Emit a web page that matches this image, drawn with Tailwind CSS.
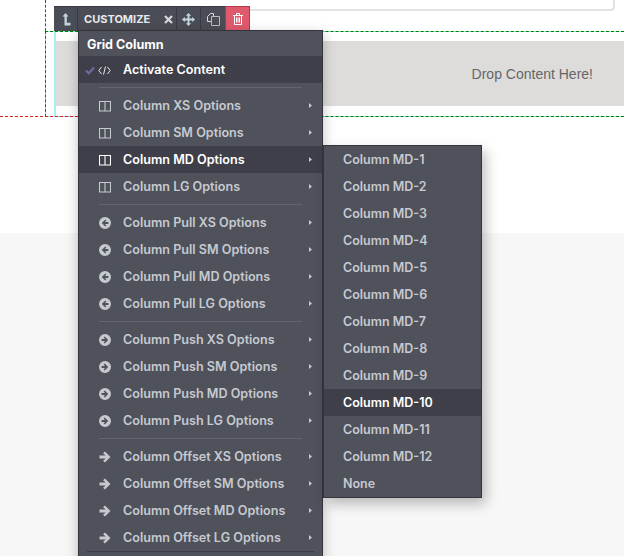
<!DOCTYPE html>
<html lang="en">
  <head>
    <meta charset="UTF-8" />
    <title>Grid Column Menu</title>
    <script src="https://cdn.jsdelivr.net/npm/@tailwindcss/browser@4"></script>
  </head>
  <body class="bg-[#f7f7f7] h-[556px] overflow-hidden relative font-['Inter',sans-serif]">
    <!-- icons -->
    <svg class="hidden">
      <symbol id="cols" viewBox="0 0 12 12"><path d="M.5 1.500h11v9.500H.5zM6 1.500v9.500" fill="none" stroke="currentColor" stroke-width="1.100"/></symbol>
      <symbol id="pull" viewBox="0 0 12 12"><path fill-rule="evenodd" fill="currentColor" d="M6 0a6 6 0 1 1 0 12A6 6 0 0 1 6 0ZM6.300 2.500 2.800 6l3.500 3.500 1.100-1.100L6 7.100h3.400V4.900H6l1.400-1.300Z"/></symbol>
      <symbol id="push" viewBox="0 0 12 12"><path fill-rule="evenodd" fill="currentColor" d="M6 0a6 6 0 1 1 0 12A6 6 0 0 1 6 0ZM5.700 2.500 4.600 3.600 6 4.900H2.600v2.200H6L4.600 8.400l1.100 1.100L9.200 6Z"/></symbol>
      <symbol id="offset" viewBox="0 0 12 12"><path fill="currentColor" d="M5.900.4 11.500 6l-5.600 5.600-1.800-1.800L6.700 7.400H.5V4.600h6.200L4.100 2.200Z"/></symbol>
      <symbol id="caret" viewBox="0 0 3 5"><path fill="currentColor" d="M0 0l3 2.500L0 5Z"/></symbol>
    </svg>

    <div class="bg-white h-[233px]">
      <div class="h-[31px] ml-[45px] border-l border-dashed border-[#008000] pl-[8px] pr-[9px]">
        <div class="h-[11px] border-b-2 border-r-2 border-[#e3e3e3] rounded-br-[4px]"></div>
      </div>
      <div class="ml-[45px] h-[86px] flex border-l border-t border-b border-dashed border-[#008000] bg-[#8fe6ea]">
        <div class="w-[8px] bg-white"></div>
        <div class="flex-1 bg-white border-l-2 border-[#a8eef2] py-[9px]">
          <div class="h-[65px] bg-[#dddcda] flex items-center justify-end pr-[31px] pt-[2px] font-['Liberation_Sans',sans-serif] text-[14px] text-[#666666]">Drop Content Here!</div>
        </div>
      </div>
    </div>
    <div class="absolute left-0 top-[116px] w-[78px] border-t border-dashed border-[#e02020]"></div>

    <!-- toolbar -->
    <div class="absolute left-[54px] top-[6px] h-[25px] w-[196px] flex bg-[#4b4d56] text-[#d5d8dc] border-t border-[#3a3b44]">
      <div class="w-[24px] flex items-center justify-center border-r border-[#3a3b44]">
        <svg width="10" height="13" viewBox="0 0 10 13"><path fill="#c3d5dc" d="M4.500 0 7.500 3.500H5.800V9.800H9.500V12.500H3.500V3.500H1.500Z"/></svg>
      </div>
      <div class="w-[99px] flex items-center pl-[6px] border-r border-[#3a3b44]">
        <span class="text-[11px] font-bold text-[#e6eaee] w-[69px] whitespace-nowrap">CUSTOMIZE</span>
        <svg width="9" height="9" viewBox="0 0 9 9" class="ml-[11px]"><path d="M1 1l7 7M8 1 1 8" stroke="#d5d8dc" stroke-width="2.200"/></svg>
      </div>
      <div class="w-[24px] flex items-center justify-center border-r border-[#3a3b44]">
        <svg width="13" height="13" viewBox="0 0 12 12"><path fill="#c4d6de" d="M6 0l2.400 2.600H6.900V5.100h2.500V3.600L12 6 9.400 8.400V6.900H6.900v2.500h1.500L6 12 3.600 9.400h1.500V6.900H2.600v1.500L0 6l2.600-2.400v1.500h2.500V2.600H3.600Z"/></svg>
      </div>
      <div class="w-[24px] flex items-center justify-center">
        <svg width="13" height="13" viewBox="0 0 13 13" fill="none" stroke="#d5d8dc"><path d="M4.500 8.500H.5v-5l3-3h3v3"/><path d="M4.500 3.500h8v9h-8z" stroke="#b8bcc2"/></svg>
      </div>
      <div class="w-[25px] flex items-center justify-center bg-[#e05a6e] border border-[#b8344a] -mt-px">
        <svg width="10" height="12" viewBox="0 0 10 12" fill="none" stroke="#fff"><path d="M0 2.500h10M3.500 2V.5h3V2M1.500 2.500V11.500h7V2.500M3.500 4.500v5M5 4.500v5M6.500 4.500v5"/></svg>
      </div>
    </div>

    <!-- main menu -->
    <div class="absolute left-[78px] top-[30px] w-[245px] h-[540px] bg-[#4f515b] border border-[#33343c] text-[12.6px] font-semibold text-[#c6cad0] shadow-[0_4px_12px_rgba(0,0,0,0.25)]">
      <div class="h-[25px] flex items-center pl-[8px] pt-[4px] text-white font-bold">Grid Column</div>
      <div class="h-[27px] flex items-center pt-px bg-[#3f3f49] text-white">
        <svg width="10" height="9" viewBox="0 0 10 9" class="ml-[6px]"><path d="M1 4.500 3.800 7.300 9 1.500" fill="none" stroke="#6f69a0" stroke-width="2.200"/></svg>
        <svg width="13" height="9" viewBox="0 0 13 9" class="ml-[3px]" fill="none" stroke="#e8e8ea"><path d="M3.500 1 .8 4.500 3.500 8M9.500 1l2.700 3.500L9.500 8M7.500.5l-2 8"/></svg>
        <span class="ml-[12px]">Activate Content</span>
      </div>

      <div class="mx-[20px] my-[4px] h-px bg-[#62646e]"></div>
      <div class="h-[27px] flex items-center pl-[20px] pt-px"><svg class="w-[12px] h-[12px]"><use href="#cols"/></svg><span class="ml-[12px] flex-1">Column XS Options</span><svg class="w-[3px] h-[5px] mr-[10px] -mt-[2px]"><use href="#caret"/></svg></div>
      <div class="h-[27px] flex items-center pl-[20px] pt-px"><svg class="w-[12px] h-[12px]"><use href="#cols"/></svg><span class="ml-[12px] flex-1">Column SM Options</span><svg class="w-[3px] h-[5px] mr-[10px] -mt-[2px]"><use href="#caret"/></svg></div>
      <div class="h-[27px] flex items-center pl-[20px] pt-px bg-[#3f3f49] text-white"><svg class="w-[12px] h-[12px]"><use href="#cols"/></svg><span class="ml-[12px] flex-1">Column MD Options</span><svg class="w-[3px] h-[5px] mr-[10px] -mt-[2px] text-[#c6cad0]"><use href="#caret"/></svg></div>
      <div class="h-[27px] flex items-center pl-[20px] pt-px"><svg class="w-[12px] h-[12px]"><use href="#cols"/></svg><span class="ml-[12px] flex-1">Column LG Options</span><svg class="w-[3px] h-[5px] mr-[10px] -mt-[2px]"><use href="#caret"/></svg></div>

      <div class="mx-[20px] my-[4px] h-px bg-[#62646e]"></div>
      <div class="h-[27px] flex items-center pl-[20px] pt-px"><svg class="w-[12px] h-[12px]"><use href="#pull"/></svg><span class="ml-[12px] flex-1">Column Pull XS Options</span><svg class="w-[3px] h-[5px] mr-[10px] -mt-[2px]"><use href="#caret"/></svg></div>
      <div class="h-[27px] flex items-center pl-[20px] pt-px"><svg class="w-[12px] h-[12px]"><use href="#pull"/></svg><span class="ml-[12px] flex-1">Column Pull SM Options</span><svg class="w-[3px] h-[5px] mr-[10px] -mt-[2px]"><use href="#caret"/></svg></div>
      <div class="h-[27px] flex items-center pl-[20px] pt-px"><svg class="w-[12px] h-[12px]"><use href="#pull"/></svg><span class="ml-[12px] flex-1">Column Pull MD Options</span><svg class="w-[3px] h-[5px] mr-[10px] -mt-[2px]"><use href="#caret"/></svg></div>
      <div class="h-[27px] flex items-center pl-[20px] pt-px"><svg class="w-[12px] h-[12px]"><use href="#pull"/></svg><span class="ml-[12px] flex-1">Column Pull LG Options</span><svg class="w-[3px] h-[5px] mr-[10px] -mt-[2px]"><use href="#caret"/></svg></div>

      <div class="mx-[20px] my-[4px] h-px bg-[#62646e]"></div>
      <div class="h-[27px] flex items-center pl-[20px] pt-px"><svg class="w-[12px] h-[12px]"><use href="#push"/></svg><span class="ml-[12px] flex-1">Column Push XS Options</span><svg class="w-[3px] h-[5px] mr-[10px] -mt-[2px]"><use href="#caret"/></svg></div>
      <div class="h-[27px] flex items-center pl-[20px] pt-px"><svg class="w-[12px] h-[12px]"><use href="#push"/></svg><span class="ml-[12px] flex-1">Column Push SM Options</span><svg class="w-[3px] h-[5px] mr-[10px] -mt-[2px]"><use href="#caret"/></svg></div>
      <div class="h-[27px] flex items-center pl-[20px] pt-px"><svg class="w-[12px] h-[12px]"><use href="#push"/></svg><span class="ml-[12px] flex-1">Column Push MD Options</span><svg class="w-[3px] h-[5px] mr-[10px] -mt-[2px]"><use href="#caret"/></svg></div>
      <div class="h-[27px] flex items-center pl-[20px] pt-px"><svg class="w-[12px] h-[12px]"><use href="#push"/></svg><span class="ml-[12px] flex-1">Column Push LG Options</span><svg class="w-[3px] h-[5px] mr-[10px] -mt-[2px]"><use href="#caret"/></svg></div>

      <div class="mx-[20px] my-[4px] h-px bg-[#62646e]"></div>
      <div class="h-[27px] flex items-center pl-[20px] pt-px"><svg class="w-[12px] h-[12px]"><use href="#offset"/></svg><span class="ml-[12px] flex-1">Column Offset XS Options</span><svg class="w-[3px] h-[5px] mr-[10px] -mt-[2px]"><use href="#caret"/></svg></div>
      <div class="h-[27px] flex items-center pl-[20px] pt-px"><svg class="w-[12px] h-[12px]"><use href="#offset"/></svg><span class="ml-[12px] flex-1">Column Offset SM Options</span><svg class="w-[3px] h-[5px] mr-[10px] -mt-[2px]"><use href="#caret"/></svg></div>
      <div class="h-[27px] flex items-center pl-[20px] pt-px"><svg class="w-[12px] h-[12px]"><use href="#offset"/></svg><span class="ml-[12px] flex-1">Column Offset MD Options</span><svg class="w-[3px] h-[5px] mr-[10px] -mt-[2px]"><use href="#caret"/></svg></div>
      <div class="h-[27px] flex items-center pl-[20px] pt-px"><svg class="w-[12px] h-[12px]"><use href="#offset"/></svg><span class="ml-[12px] flex-1">Column Offset LG Options</span><svg class="w-[3px] h-[5px] mr-[10px] -mt-[2px]"><use href="#caret"/></svg></div>

      <div class="mx-[8px] h-px bg-[#3a3b44]"></div>
    </div>

    <!-- column md submenu -->
    <div class="absolute left-[323px] top-[145px] w-[159px] bg-[#4f515b] border border-[#33343c] text-[12.5px] font-semibold text-[#c6cad0] shadow-[4px_6px_12px_rgba(0,0,0,0.25)]">
      <div class="h-[27px] flex items-center pl-[19px] pt-px">Column MD-1</div>
      <div class="h-[27px] flex items-center pl-[19px] pt-px">Column MD-2</div>
      <div class="h-[27px] flex items-center pl-[19px] pt-px">Column MD-3</div>
      <div class="h-[27px] flex items-center pl-[19px] pt-px">Column MD-4</div>
      <div class="h-[27px] flex items-center pl-[19px] pt-px">Column MD-5</div>
      <div class="h-[27px] flex items-center pl-[19px] pt-px">Column MD-6</div>
      <div class="h-[27px] flex items-center pl-[19px] pt-px">Column MD-7</div>
      <div class="h-[27px] flex items-center pl-[19px] pt-px">Column MD-8</div>
      <div class="h-[27px] flex items-center pl-[19px] pt-px">Column MD-9</div>
      <div class="h-[27px] flex items-center pl-[19px] pt-px bg-[#3f3f49] text-white">Column MD-10</div>
      <div class="h-[27px] flex items-center pl-[19px] pt-px">Column MD-11</div>
      <div class="h-[27px] flex items-center pl-[19px] pt-px">Column MD-12</div>
      <div class="h-[27px] flex items-center pl-[19px] pt-px">None</div>
    </div>
  </body>
</html>
